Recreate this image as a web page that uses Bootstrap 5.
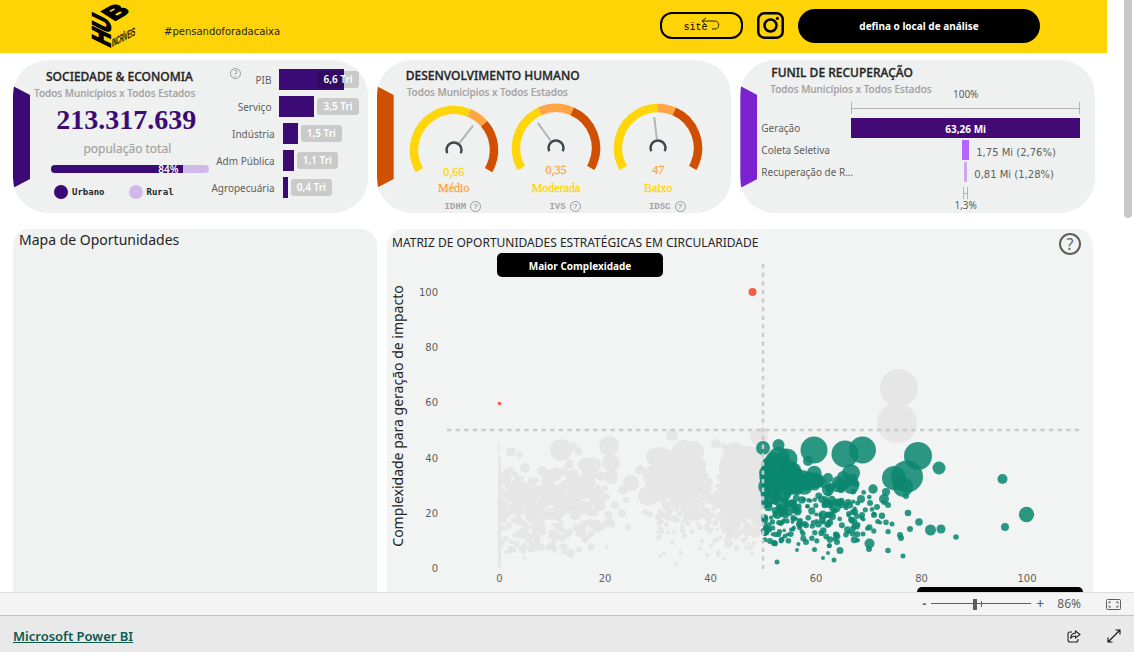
<!DOCTYPE html>
<html lang="pt-BR">
<head>
<meta charset="utf-8">
<meta name="viewport" content="width=device-width, initial-scale=1">
<title>HUB Incríveis</title>
<link href="https://cdn.jsdelivr.net/npm/bootstrap@5.3.0/dist/css/bootstrap.min.css" rel="stylesheet">
<style>
  :root { --roxo:#3b0a75; --lilas:#d0b8e8; --painel:#eff1f1; --cinza:#a6a2a2; --texto:#605e5c; }
  body { font-family:"Noto Sans","Open Sans",sans-serif; font-size:10px; line-height:16px; color:#252423; background:#fff; }
  button { font-family:inherit; }
  .topbar { background:#ffd406; height:53px; padding:0 67px 2px 90px; }
  .logo { width:46px; height:50px; overflow:visible; }
  .tagline { margin-left:28px; padding-top:12px; font-family:"DejaVu Sans","Noto Sans",sans-serif; }
  .site-btn { width:83px; height:27px; border:2px solid #000; border-radius:12px; background:none; font:10px/12px "Liberation Mono",monospace; padding:4px 12px 0 0; }
  .site-btn svg { right:20px; top:3px; }
  .insta { margin:0 14px; }
  .local-btn { width:242px; height:34px; border:0; border-radius:17px; background:#000; color:#fff; font-weight:700; }
  .indicadores { padding:7px 12px 0 13px; gap:9px; }
  .indicador { flex:1 1 0; min-width:0; height:153px; background:var(--painel); border-radius:35px; }
  .aba { left:0; top:26px; width:17px; height:102px; clip-path:polygon(0 0,100% 9px,100% 93px,0 100%); }
  .titulo { font-size:12px; font-weight:500; line-height:18px; margin:0; white-space:nowrap; -webkit-text-stroke:.3px; }
  .recorte { color:var(--cinza); font-weight:500; line-height:14px; white-space:nowrap; -webkit-text-stroke:.2px; }
  .populacao { font:700 28px/36px "Liberation Serif",serif; color:var(--roxo); margin-top:2px; padding-left:6px; }
  .pop-rotulo { font-size:12px; color:var(--cinza); line-height:18px; margin-top:2px; padding-left:8px; -webkit-text-stroke:.2px; }
  .urbana { height:8px; background:var(--lilas); border-radius:4px; margin:7px 4px 0 17px; overflow:visible; }
  .urbana .progress-bar { background:var(--roxo); font-size:10px; font-weight:600; line-height:8px; align-items:flex-end; padding-right:5px; border-radius:4px 0 0 4px; overflow:visible; }
  .legenda { font:700 9px/14px "DejaVu Sans Mono",monospace; margin:12px 0 0 20px; gap:24px; }
  .ponto { width:14px; height:14px; border-radius:50%; }
  .setores { width:146px; margin-right:9px; padding-top:6px; }
  .setor { height:27px; color:var(--texto); }
  .setor-nome { width:62px; }
  .setor-barra { height:21px; background:var(--roxo); }
  .etiqueta { background:#cacaca; color:#fff; font-weight:600; border-radius:3px; padding:0 6px; line-height:17px; margin-left:3px; white-space:nowrap; }
  .duvida { border:1px solid #999; border-radius:50%; background:none; color:#888; width:11px; height:11px; padding:0; font-size:8px; line-height:9px; }
  .medidores { padding:0 22px 0 26px; }
  .medidor { flex:1 1 0; font:12px/16px "Liberation Serif",serif; }
  .medidor svg { width:92px; height:70px; }
  .valor { margin-top:-10px; }
  .sigla { font:700 9px/12px "Liberation Mono",monospace; color:var(--cinza); margin-top:5px; padding-left:18px; }
  .amarelo { color:#ffd60a; -webkit-text-stroke:.3px; } .laranja { color:#ffa544; -webkit-text-stroke:.3px; }
  .funil { grid-template-columns:90px 1fr; padding:0 15px 0 21px; margin-top:-10px; color:var(--texto); }
  .funil > div { height:22px; line-height:20px; white-space:nowrap; }
  .escala { height:12px; border:solid #b8b3b3; border-width:0 1px; background:linear-gradient(#b8b3b3,#b8b3b3) 0 6px/100% 1px no-repeat; }
  .faixa { height:20px; }
  .quantia { font-family:"DejaVu Sans",sans-serif; padding:3px 0 0 7px; }
  .paineis { padding:16px 14px 0 13px; gap:10px; }
  .mapa { flex:364 1 0; min-width:0; background:#f0f2f2; border-radius:16px 16px 0 0; }
  .mapa h2 { font-size:14px; font-weight:400; line-height:22px; margin:0 0 0 6px; }
  .matriz { flex:706 1 0; min-width:0; background:#f2f4f4; border-radius:16px 16px 0 0; }
  .matriz h2 { font-size:12px; font-weight:400; line-height:27px; height:25px; margin:0 0 0 5px; }
  .pilula { width:166px; height:24px; border:0; border-radius:5px; background:#000; color:#fff; font-weight:700; line-height:24px; }
  .duvida-g { width:22px; height:22px; border:2px solid #605e5c; color:#605e5c; font-size:16px; line-height:18px; right:12px; top:4px; }
  .grafico text { font-size:10px; fill:var(--texto); font-family:"DejaVu Sans",sans-serif; }
  .grafico .eixo { font-size:14px; fill:#252423; font-family:"Noto Sans",sans-serif; }
  .rolagem { width:27px; }
  .rolagem span { display:block; width:8px; height:218px; margin-left:17px; background:#c8c8c8; border-radius:0 0 4px 4px; }
  .zoombar { height:23px; background:#f4f4f4; border-top:1px solid #ddd; padding-right:13px; color:var(--texto); font-size:12px; }
  .zoombar button, .rodape button { border:0; background:none; padding:0; color:inherit; line-height:20px; display:flex; align-items:center; justify-content:center; }
  .zoombar input { appearance:none; width:100px; height:12px; margin:0 5px; background:linear-gradient(var(--texto),var(--texto)) 0 5px/100% 1px no-repeat, linear-gradient(var(--texto),var(--texto)) 50px 3px/1px 6px no-repeat; }
  .zoombar input::-webkit-slider-thumb { appearance:none; width:4px; height:11px; background:var(--texto); }
  .rodape { height:37px; background:#e9e9e9; border-top:1px solid #c2c2c2; padding:4px 13px 0; font-size:13px; }
  .rodape a { color:#0b5a4c; font-weight:600; }
</style>
</head>
<body class="d-flex flex-column vh-100 overflow-hidden">
<main class="d-flex flex-fill overflow-hidden">
  <div class="flex-fill" style="min-width:0">
    <header class="topbar d-flex align-items-center">
      <svg class="logo" viewBox="90 0 46 50" role="img" aria-label="HUB Incríveis" font-family="Liberation Sans, sans-serif" font-weight="700" stroke="#000">
        <g font-size="27" stroke-width="2.2"><text transform="matrix(0 -.72 .93 .46 110 47)">H</text><text transform="matrix(0 -.7 .93 .46 110 33)">U</text><text transform="matrix(.86 -.5 .74 .46 114 20)">B</text></g>
        <text transform="matrix(.42 -.22 0 1 112 46)" font-size="11" font-weight="400" stroke-width=".4">INCRÍVEIS</text>
      </svg>
      <span class="tagline">#pensandoforadacaixa</span>
      <button class="site-btn position-relative ms-auto" type="button">site
        <svg class="position-absolute" width="20" height="14" viewBox="0 0 20 14" fill="none" stroke="#222"><path d="M5 1 1 4l4 4M1 4h13c5 0 5 8 0 8h-3"/></svg>
      </button>
      <a href="#" aria-label="Instagram" class="insta d-flex"><svg width="27" height="27" viewBox="0 0 27 27" fill="none" stroke="#000" stroke-width="2.5"><rect x="1.3" y="1.3" width="24.4" height="24.4" rx="6"/><circle cx="13.5" cy="13.5" r="6"/><circle cx="20.4" cy="6.4" r="1.6" fill="#000" stroke="none"/></svg></a>
      <button class="local-btn" type="button">defina o local de análise</button>
    </header>

    <section class="indicadores d-flex">
      <article class="indicador position-relative d-flex overflow-hidden">
        <span class="aba position-absolute" style="background:#3b0a75"></span>
        <div class="flex-fill" style="padding:8px 0 0 21px">
          <h2 class="titulo" style="padding-left:12px">SOCIEDADE &amp; ECONOMIA</h2>
          <div class="recorte">Todos Municípios x Todos Estados</div>
          <div class="populacao text-center">213.317.639</div>
          <div class="pop-rotulo text-center">população total</div>
          <div class="progress urbana"><div class="progress-bar" style="width:84%">84%</div></div>
          <div class="legenda d-flex">
            <span class="d-flex gap-1"><i class="ponto" style="background:#3b0a75"></i>Urbano</span>
            <span class="d-flex gap-1"><i class="ponto" style="background:#d0b8e8"></i>Rural</span>
          </div>
        </div>
        <button class="duvida position-absolute" style="left:217px;top:8px" type="button" aria-label="Ajuda">?</button>
        <div class="setores" id="setores"></div>
      </article>

      <article class="indicador position-relative overflow-hidden">
        <span class="aba position-absolute" style="background:#d14f00"></span>
        <h2 class="titulo" style="padding:7px 0 0 29px">DESENVOLVIMENTO HUMANO</h2>
        <div class="recorte" style="padding-left:30px">Todos Municípios x Todos Estados</div>
        <div class="medidores d-flex text-center" id="medidores"></div>
      </article>

      <article class="indicador position-relative overflow-hidden">
        <span class="aba position-absolute" style="background:#7a22cf"></span>
        <h2 class="titulo" style="padding:4px 0 0 31px">FUNIL DE RECUPERAÇÃO</h2>
        <div class="recorte" style="padding-left:30px">Todos Municípios x Todos Estados</div>
        <div class="funil d-grid">
          <span></span><span class="text-center">100%</span>
          <span></span><span class="escala"></span>
          <span style="height:4px"></span><span></span>
          <div>Geração</div><div><div class="faixa text-center text-white fw-bold" style="background:#430a75;line-height:22px">63,26 Mi</div></div>
          <div>Coleta Seletiva</div><div class="d-flex"><span style="width:48.5%"></span><span class="faixa" style="width:7px;background:#b266ff"></span><span class="quantia">1,75 Mi (2,76%)</span></div>
          <div>Recuperação de R...</div><div class="d-flex"><span style="width:49.4%"></span><span class="faixa" style="width:3px;background:#cda6f5"></span><span class="quantia">0,81 Mi (1,28%)</span></div>
          <span></span><span class="escala mx-auto" style="width:5px;margin-top:3px"></span>
          <span></span><span class="text-center" style="line-height:12px">1,3%</span>
        </div>
      </article>
    </section>

    <section class="paineis d-flex">
      <article class="mapa"><h2>Mapa de Oportunidades</h2></article>
      <article class="matriz position-relative">
        <h2>MATRIZ DE OPORTUNIDADES ESTRATÉGICAS EM CIRCULARIDADE</h2>
        <button class="pilula position-absolute" style="left:110px;top:24px" type="button">Maior Complexidade</button>
        <button class="duvida duvida-g position-absolute" type="button" aria-label="Ajuda">?</button>
        <svg class="grafico d-block w-100" viewBox="387 254 706 333" id="grafico"></svg>
        <button class="pilula d-block ms-auto" style="margin-right:10px" type="button" aria-label="Maior potencial"></button>
      </article>
    </section>
  </div>
  <div class="rolagem"><span></span></div>
</main>

<div class="zoombar d-flex align-items-center justify-content-end flex-shrink-0">
  <button type="button" aria-label="Diminuir zoom"><b>-</b></button>
  <input type="range" min="0" max="100" value="43" aria-label="Zoom">
  <button type="button" aria-label="Aumentar zoom" style="font-size:14px">+</button>
  <span style="margin:0 25px 0 13px">86%</span>
  <button type="button" aria-label="Ajustar à página"><svg width="15" height="11" viewBox="0 0 15 11" fill="none" stroke="#605e5c"><rect x=".5" y=".5" width="14" height="10" rx="1"/><path d="M3 4.5V3h2M10 3h2v1.5M3 6.5V8h2M10 8h2V6.5"/></svg></button>
</div>
<footer class="rodape d-flex align-items-center flex-shrink-0">
  <a href="#">Microsoft Power BI</a>
  <button class="ms-auto" type="button" aria-label="Compartilhar"><svg width="14" height="13" viewBox="0 0 14 13" fill="none" stroke="#222" stroke-width="1.1"><path d="M5 2H3Q1 2 1 4v6q0 2 2 2h6q2 0 2-2V9M8.5 1l4.500 3.500L8.500 8V6Q5 6 3.500 8.500 4 3.200 8.500 3z"/></svg></button>
  <button style="margin-left:26px" type="button" aria-label="Tela cheia"><svg width="14" height="14" viewBox="0 0 14 14" fill="none" stroke="#111" stroke-width="1.1"><path d="M1 13 13 1M8.5 1H13v4.5M1 8.5V13h4.5"/></svg></button>
</footer>

<script src="https://cdn.jsdelivr.net/npm/bootstrap@5.3.0/dist/js/bootstrap.bundle.min.js"></script>
<script>
  // PIB por setor
  document.getElementById('setores').innerHTML = [
    ['PIB', '6,6', 65], ['Serviço', '3,5', 35], ['Indústria', '1,5', 15], ['Adm Pública', '1,1', 11], ['Agropecuária', '0,4', 5]
  ].map(([n, v, w], i) => `<div class="setor d-flex align-items-center"><span class="setor-nome d-flex justify-content-end text-nowrap">${n}</span>
    <span class="setor-barra flex-shrink-0 ms-2" style="width:${w}px"></span>${i ? `<span class="etiqueta">${v} Tri</span>` : `<span class="etiqueta position-relative" style="margin-left:-27px;background:linear-gradient(90deg,#320a60 27px,#cacaca 27px)">${v} Tri</span>`}</div>`).join('');

  // Medidores: ângulos em graus a partir do topo, de -120 a 120
  const arco = (de, ate, cor, r, w) => `<circle r="${r}" fill="none" stroke="${cor}" stroke-width="${w}" pathLength="360" stroke-dasharray="${ate - de} 360" transform="rotate(${de - 90})"/>`;
  document.getElementById('medidores').innerHTML = [
    ['0,66', 'Médio', 'IDHM', 22, 49, 38, 'amarelo', 'laranja', 5],
    ['0,35', 'Moderada', 'IVS', -24, 24, -36, 'laranja', 'amarelo', 3],
    ['47', 'Baixo', 'IDSC', 0, 24, -7, 'laranja', 'amarelo', 3]
  ].map(([v, t, s, a, b, n, c1, c2, m]) => `<div class="medidor" style="padding-top:${m}px">
    <svg class="d-block mx-auto" viewBox="-46 -46 92 70">${arco(-120, a, '#ffd60a', 40, 8.5)}${arco(a, b, '#ffa544', 40, 8.5)}${arco(b, 120, '#d14f00', 40, 8.5)}
    ${arco(-115, 115, '#3c4a50', 7.5, 2.5)}<path d="M0-9V-31" stroke="#b3b3b3" stroke-width="2" transform="rotate(${n})"/></svg>
    <div class="valor ${c1}">${v}</div><div class="${c2}" style="${m === 3 ? 'margin-top:2px' : ''}">${t}</div>
    <div class="sigla d-flex justify-content-center gap-1">${s}<button class="duvida" type="button" aria-label="Ajuda">?</button></div></div>`).join('');

  // Matriz de oportunidades
  let semente = 7;
  const rnd = () => (semente = (semente * 16807) % 2147483647) / 2147483647;
  const nuvem = (n, x0, x1, y0, y1, r0, r1) => Array.from({length: n}, () => [x0 + rnd() * (x1 - x0), y0 + (rnd() + rnd()) / 2 * (y1 - y0), r0 + rnd() * (r1 - r0)]);
  const cinza = [
    [561,450,11],[572,447,5],[609,446,10],[611,463,9],[593,465,8],[585,465,7],[578,451,4],[511,452,5],[520,455,3],[525,468,5],[542,471,5],[672,435,6],[684,452,12],[693,452,11],[648,496,10],[655,457,9],[656,477,13],[697,465,9],[716,444,5],[640,470,5],[631,483,8],[623,490,5],[622,513,4],[605,488,3],[606,497,4],[608,515,4],[615,505,4],[611,477,7],[601,476,5],[628,527,3],[607,547,2],[650,514,3],[645,512,3],[626,500,3],[759,437,9],[899,388,19],[897,423,20],[724,446,3],[735,453,11],[747,456,10],[755,460,10],[729,464,10],[676,564,2],[724,559,2],[664,553,2],[660,556,2],[707,555,2],[524,558,2],[570,553,4],[752,554,2],[571,556,2],
    ...Array.from({length: 60}, (_, i) => [499.5, 458 + i * 1.84, 1.6]), [499,444,1.5],[499,448,1.5],[499,452,1.5],
    ...nuvem(40, 500, 520, 468, 515, 2, 5), ...nuvem(190, 500, 545, 470, 556, 1.8, 3.2), ...nuvem(25, 520, 550, 478, 512, 3, 5),
    ...nuvem(85, 548, 592, 461, 522, 3, 6), ...nuvem(45, 548, 592, 515, 552, 2, 3.5), ...nuvem(18, 585, 612, 518, 530, 2, 4), ...nuvem(16, 592, 603, 480, 515, 3, 4), ...nuvem(14, 500, 592, 540, 557, 2, 3),
    ...nuvem(50, 660, 702, 446, 500, 5, 8), ...nuvem(50, 656, 722, 475, 520, 3, 5), ...nuvem(120, 657, 722, 485, 540, 1.8, 3), ...nuvem(12, 658, 722, 530, 556, 2, 2.5),
    ...nuvem(130, 726, 758, 449, 505, 6, 9), ...nuvem(80, 722, 761, 490, 527, 3, 5), ...nuvem(90, 722, 762, 505, 552, 1.8, 3)
  ];
  const verde = [
    [763,448,7],[778.5,445,6],[814,450,13.5],[845,454,13.5],[862.5,450,13.5],[918,456,14],[907,476.5,16],[894,478,12],[903,487,10],[939,468,6.5],[1002.5,479,5],[1026.5,514.5,7.7],[1005,527,4],[930.5,530,5.5],[941,529,4.5],[956,537,2.8],[919,522,3.8],[908,513,3.3],[910,529,3],[892,524,2.5],[903,556,2.5],[888,550.5,2.8],[869.5,543.5,5],[869,549,3],[840,550.5,3.5],[834,560,2.5],[823,558,2],[828,553,2],[777,562,2.5],[814.5,549.5,2.5],[797,550,2],[873,489,4.7],[886,492,4],[906,496,3],[851,473,9],[851,486,8],[843,477,6],[838,482,6],[828,478,5],[852,480,6],[787,459,10.5],[779,458,11],[808,461,5],[835,507,6],[823,515,4.5],[789,512,4],[828,490,6],[841,489,4],[862,515,3],[874,515,3],[884,499,5],[888,505,3],[861,499,4],[870,503,3],[877,507,3],[900,535,3],[901,538,3],[770,541,3],[774,543,3],[806,542,3],[829,546,2],[837,542,3],
    ...nuvem(65, 766, 797, 456, 500, 4, 8), ...nuvem(34, 790, 820, 465, 493, 4, 8), ...nuvem(50, 764, 800, 485, 520, 2, 4.5), ...nuvem(45, 764, 800, 510, 546, 1.8, 3),
    ...nuvem(14, 815, 858, 478, 492, 3, 5), ...nuvem(38, 798, 858, 490, 520, 2, 4), ...nuvem(50, 798, 858, 508, 548, 2, 3.5), ...nuvem(22, 852, 892, 490, 540, 2, 3.5), ...nuvem(25, 763.5, 766, 460, 535, 2, 3)
  ];
  const bolhas = (pts, attrs) => `<g ${attrs}>${pts.map(([x, y, r]) => `<circle cx="${x.toFixed(1)}" cy="${y.toFixed(1)}" r="${r.toFixed(1)}"/>`).join('')}</g>`;
  document.getElementById('grafico').innerHTML =
    bolhas(cinza, 'fill="#e6e6e6"') +
    bolhas(verde, 'fill="#0a8770" fill-opacity=".86"') +
    bolhas([[752.5, 292, 4], [499.5, 403.5, 1.8]], 'fill="#f65c42"') +
    `<g stroke="#cbcbcb" stroke-width="2.5" stroke-dasharray="4.3 4.3"><path d="M763 264V569"/><path d="M447 430H1080"/></g>` +
    [0, 20, 40, 60, 80, 100].map(n => `<text x="438" y="${572 - n * 2.76}" text-anchor="end">${n}</text><text x="${499.5 + n * 5.275}" y="582" text-anchor="middle">${n}</text>`).join('') +
    `<text class="eixo" transform="translate(403 416) rotate(-90)" text-anchor="middle">Complexidade para geração de impacto</text>`;
</script>
</body>
</html>
